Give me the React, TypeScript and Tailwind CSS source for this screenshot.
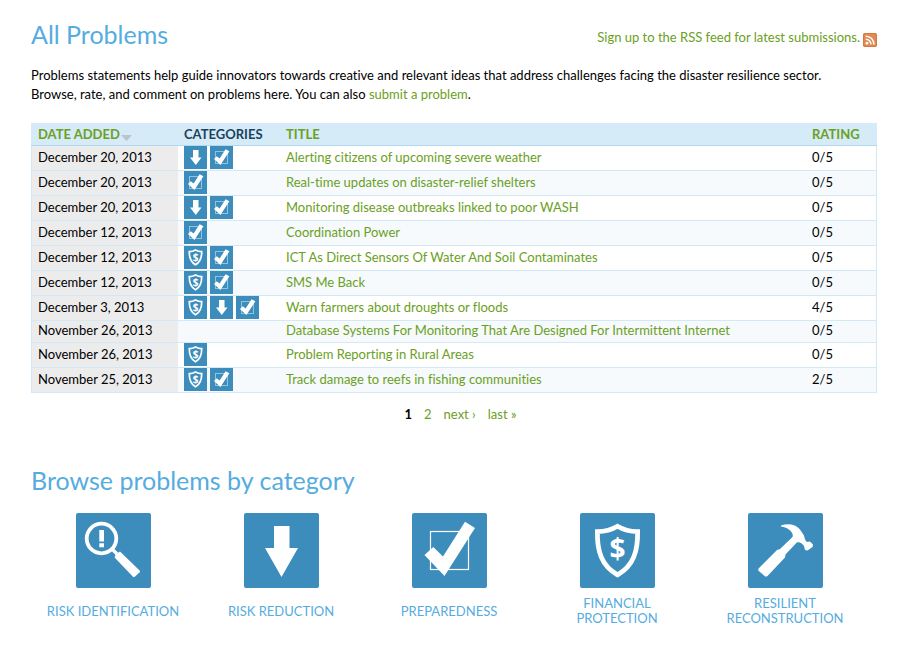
import type { ReactNode } from "react";

type Kind = "identification" | "reduction" | "preparedness" | "protection" | "reconstruction";

const glyphs: Record<Kind, ReactNode> = {
  identification: (
    <>
      <circle cx="25.5" cy="25.5" r="14.8" fill="none" stroke="#fff" strokeWidth="3.8" />
      <path d="M36 36 L41 41" stroke="#fff" strokeWidth="3.4" />
      <path
        d="M39.6 41.5 L44 38.5 L63.6 57.4 Q64.4 58.2 63.6 59.2 L58.8 63.8 Q57.8 64.6 57 63.8 L38.6 44.6 Z"
        fill="#fff"
      />
      <path d="M23.3 17 H28 V28.6 H23.3 Z M23.3 30.2 H28 V34.2 H23.3 Z" fill="#fff" />
    </>
  ),
  reduction: <path d="M30 13 H45.5 V35 H54 L37.5 64 L21 35 H30 Z" fill="#fff" />,
  preparedness: (
    <>
      <rect x="18.5" y="18.5" width="38" height="38" fill="none" stroke="#fff" strokeWidth="1.2" />
      <path d="M12.5 42 L21.3 34 L31 43.5 L53 8.7 L63 15 L32.5 63 Z" fill="#fff" />
    </>
  ),
  protection: (
    <>
      <path
        d="M37.5 13.2 C32 16.5 25 18.5 17.4 18.6 C17 38 21.5 53 37.5 61.8 C53.5 53 58 38 57.6 18.6 C50 18.5 43 16.5 37.5 13.2 Z"
        fill="none"
        stroke="#fff"
        strokeWidth="4.8"
      />
      <text
        x="37.5"
        y="46"
        textAnchor="middle"
        fill="#fff"
        fontSize="28"
        fontWeight="700"
        fontFamily="'Open Sans', 'Liberation Sans', sans-serif"
      >
        $
      </text>
    </>
  ),
  reconstruction: (
    <path
      d="M33 12.5 C40 10 48 11.5 52 16.5 L56 22.5 C56.5 25 57.2 27.5 59 29 L62 28.5 L65 31.5 L64.5 34 L59.5 37.5 L57 37 L55.8 32.5 C53.5 29.5 50.5 28.5 48.8 29.5 L37.5 41.5 L37 44.5 L19.5 63 Q18 64.2 16.5 63 L10.8 58 Q9.6 56.8 10.8 55.3 L29 37 L32 36 L44.5 24 C46 20 41 14.5 33 13.5 Z"
      fill="#fff"
    />
  ),
};

const smallGlyphs: Partial<Record<Kind, ReactNode>> = {
  reduction: <path d="M9 4 H14.5 V11.5 H17.5 L11.8 19 L6 11.5 H9 Z" fill="#fff" />,
  preparedness: (
    <>
      <rect x="5.5" y="5.5" width="12" height="12" fill="none" stroke="#8fc3e0" />
      <path d="M4 13 L6.8 10.2 L9.6 12.6 L15.6 3.2 L19.4 5.2 L10.4 19 Z" fill="#fff" />
    </>
  ),
  protection: (
    <>
      <path
        d="M11.5 4 C9.8 5 7.6 5.7 5.3 5.7 C5.2 11.8 6.6 16 11.5 18.8 C16.4 16 17.8 11.8 17.7 5.7 C15.4 5.7 13.2 5 11.5 4 Z"
        fill="none"
        stroke="#fff"
        strokeWidth="1.7"
      />
      <text
        x="11.5"
        y="14.6"
        textAnchor="middle"
        fill="#fff"
        fontSize="10"
        fontWeight="700"
        fontFamily="'Open Sans', 'Liberation Sans', sans-serif"
      >
        $
      </text>
    </>
  ),
};

type Problem = { date: string; kinds: Kind[]; title: string; rating: string };

const problems: Problem[] = [
  { date: "December 20, 2013", kinds: ["reduction", "preparedness"], title: "Alerting citizens of upcoming severe weather", rating: "0/5" },
  { date: "December 20, 2013", kinds: ["preparedness"], title: "Real-time updates on disaster-relief shelters", rating: "0/5" },
  { date: "December 20, 2013", kinds: ["reduction", "preparedness"], title: "Monitoring disease outbreaks linked to poor WASH", rating: "0/5" },
  { date: "December 12, 2013", kinds: ["preparedness"], title: "Coordination Power", rating: "0/5" },
  { date: "December 12, 2013", kinds: ["protection", "preparedness"], title: "ICT As Direct Sensors Of Water And Soil Contaminates", rating: "0/5" },
  { date: "December 12, 2013", kinds: ["protection", "preparedness"], title: "SMS Me Back", rating: "0/5" },
  { date: "December 3, 2013", kinds: ["protection", "reduction", "preparedness"], title: "Warn farmers about droughts or floods", rating: "4/5" },
  { date: "November 26, 2013", kinds: [], title: "Database Systems For Monitoring That Are Designed For Intermittent Internet", rating: "0/5" },
  { date: "November 26, 2013", kinds: ["protection"], title: "Problem Reporting in Rural Areas", rating: "0/5" },
  { date: "November 25, 2013", kinds: ["protection", "preparedness"], title: "Track damage to reefs in fishing communities", rating: "2/5" },
];

const categories: { kind: Kind; label: string }[] = [
  { kind: "identification", label: "RISK IDENTIFICATION" },
  { kind: "reduction", label: "RISK REDUCTION" },
  { kind: "preparedness", label: "PREPAREDNESS" },
  { kind: "protection", label: "FINANCIAL PROTECTION" },
  { kind: "reconstruction", label: "RESILIENT RECONSTRUCTION" },
];

function SmallIcon({ kind }: { kind: Kind }) {
  return (
    <svg viewBox="0 0 23 23" className="block size-[23px] bg-[#3c8dbc]" role="img" aria-label={kind}>
      {smallGlyphs[kind]}
    </svg>
  );
}

function RssIcon() {
  return (
    <svg viewBox="0 0 14 14" className="size-[14px]" aria-hidden="true">
      <rect width="14" height="14" rx="2" fill="#e08a52" />
      <rect x="0.5" y="0.5" width="13" height="13" rx="1.5" fill="none" stroke="#d27a44" />
      <circle cx="4" cy="10.2" r="1.4" fill="#fff" />
      <path d="M2.8 6.2 A5 5 0 0 1 7.9 11.4 M2.8 3.2 A8 8 0 0 1 10.9 11.4" fill="none" stroke="#fff" strokeWidth="1.5" />
    </svg>
  );
}

export default function App() {
  return (
    <main className="bg-white pt-[19px] pr-11 pb-9 pl-[31px] font-['Lato','Open_Sans',sans-serif] text-[13px] text-black [font-variant-ligatures:none]">
      <header className="flex items-start justify-between">
        <h1 className="text-[25px] leading-[30px] text-[#55acde]">All Problems</h1>
        <a href="#rss" className="mt-[9px] flex items-start gap-[3px] leading-[19px] text-[#6ba023]">
          Sign up to the RSS feed for latest submissions.
          <span className="pt-[5px]">
            <RssIcon />
          </span>
        </a>
      </header>

      <p className="mt-[17px] leading-[19px]">
        Problems statements help guide innovators towards creative and relevant ideas that address challenges facing the
        disaster resilience sector.
        <br />
        Browse, rate, and comment on problems here. You can also{" "}
        <a href="#submit" className="text-[#6ba023]">
          submit a problem
        </a>
        .
      </p>

      <table className="mt-[19px] w-full table-fixed border-separate border-spacing-0 text-left">
        <colgroup>
          <col className="w-[147px]" />
          <col className="w-[102px]" />
          <col />
          <col className="w-[71px]" />
        </colgroup>
        <thead>
          <tr className="h-[23px] bg-[#d5ebf8] leading-[22px] text-[#6ba023]">
            <th scope="col" className="border-b border-[#b0d9ee] pl-[7px] font-bold">
              <a href="#date" className="flex items-center">
                DATE ADDED
                <svg viewBox="0 0 11 6" className="mt-2 ml-px h-[6px] w-[11px]" aria-hidden="true">
                  <path d="M0 0 H11 L5.5 6 Z" fill="#bdc3c7" />
                </svg>
              </a>
            </th>
            <th scope="col" className="border-b border-[#b0d9ee] pl-[6px] font-bold text-[#1b435d]">
              CATEGORIES
            </th>
            <th scope="col" className="border-b border-[#b0d9ee] pl-[6px] font-bold">
              <a href="#title">TITLE</a>
            </th>
            <th scope="col" className="border-b border-[#b0d9ee] pl-[6px] font-bold">
              <a href="#rating">RATING</a>
            </th>
          </tr>
        </thead>
        <tbody>
          {problems.map((p) => (
            <tr key={p.title} className="leading-[19px] even:bg-[#f6fafd]">
              <td className="border-b border-l border-[#d3e9f6] bg-[#ececec] pb-[2px] pl-[6px]">{p.date}</td>
              <td className="border-b border-[#d3e9f6] pl-[6px]">
                {p.kinds.length > 0 && (
                  <div className="flex gap-[3px] pb-px">
                    {p.kinds.map((k) => (
                      <SmallIcon key={k} kind={k} />
                    ))}
                  </div>
                )}
              </td>
              <td className="border-b border-[#d3e9f6] pb-[2px] pl-[6px] text-[#6ba023]">
                <a href="#problem">{p.title}</a>
              </td>
              <td className="border-r border-b border-[#d3e9f6] pb-[2px] pl-[6px]">{p.rating}</td>
            </tr>
          ))}
        </tbody>
      </table>

      <nav aria-label="Pages" className="mt-3 flex justify-center gap-3 pl-[13px] leading-[19px] text-[#6ba023]">
        <span className="font-bold text-black">1</span>
        <a href="#page-2">2</a>
        <a href="#next">next ›</a>
        <a href="#last">last »</a>
      </nav>

      <h2 className="mt-[41px] text-[25px] leading-[30px] text-[#55acde]">Browse problems by category</h2>
      <ul className="mt-[18px] -ml-0.5 grid grid-cols-5 pr-2">
        {categories.map((c) => (
          <li key={c.kind}>
            <a href="#category" className="flex flex-col items-center text-center leading-[15px] text-[#55acde]">
              <svg viewBox="0 0 75 75" className="size-[75px] rounded-xs bg-[#3c8dbc]" aria-hidden="true">
                {glyphs[c.kind]}
              </svg>
              <span className="mt-2 flex h-[30px] w-[140px] items-center justify-center">{c.label}</span>
            </a>
          </li>
        ))}
      </ul>
    </main>
  );
}
